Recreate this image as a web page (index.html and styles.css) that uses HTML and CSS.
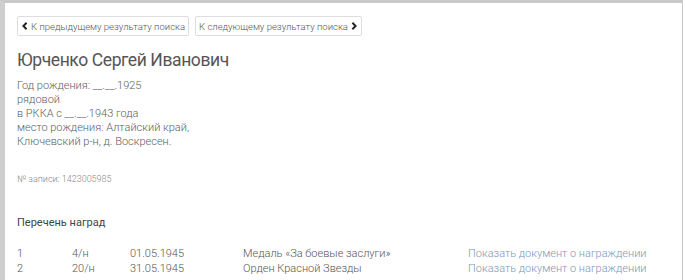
FILE: index.html
```html
<!DOCTYPE html>
<html lang="ru">
<head>
    <meta charset="UTF-8">
    <link rel="stylesheet" href="styles.css">
</head>
<body>
    <div class="page">
        <div class="nav">
            <a class="nav-btn" href="#">
                <svg class="arrow" viewBox="0 0 10 10" width="8" height="8"><path d="M7 1 L3 5 L7 9" fill="none" stroke="#222" stroke-width="2.4"/></svg>
                К предыдущему результату поиска
            </a>
            <a class="nav-btn" href="#">
                К следующему результату поиска
                <svg class="arrow" viewBox="0 0 10 10" width="8" height="8"><path d="M3 1 L7 5 L3 9" fill="none" stroke="#222" stroke-width="2.4"/></svg>
            </a>
        </div>

        <h1 class="name">Юрченко Сергей Иванович</h1>
        <div class="info">
            <div>Год рождения: __.__.1925</div>
            <div>рядовой</div>
            <div>в РККА с __.__.1943 года</div>
            <div>место рождения: Алтайский край,</div>
            <div>Ключевский р-н, д. Воскресен.</div>
        </div>

        <div class="record">№ записи: 1423005985</div>

        <div class="awards-title">Перечень наград</div>
        <div class="awards">
            <div class="award">
                <span class="col-n">1</span>
                <span class="col-doc">4/н</span>
                <span class="col-date">01.05.1945</span>
                <span class="col-name">Медаль «За боевые заслуги»</span>
                <a class="col-link" href="#">Показать документ о награждении</a>
            </div>
            <div class="award">
                <span class="col-n">2</span>
                <span class="col-doc">20/н</span>
                <span class="col-date">31.05.1945</span>
                <span class="col-name">Орден Красной Звезды</span>
                <a class="col-link" href="#">Показать документ о награждении</a>
            </div>
        </div>
    </div>
</body>
</html>
```

FILE: styles.css
```css
body {
    margin: 0;
    background-color: #fff;
    font-family: Roboto, 'Liberation Sans', sans-serif;
    color: #555;
}
.page {
    background-color: #fff;
    width: 683px;
    height: 280px;
    border-top: 3px solid #c9c9c9;
    border-left: 5px solid #cfcfcf;
    border-right: 1px solid #c8c8c8;
    box-sizing: border-box;
    padding: 13px 12px 0 12px;
    overflow: hidden;
}
.nav {
    display: flex;
    gap: 6px;
}
.nav-btn {
    display: flex;
    align-items: center;
    gap: 2px;
    height: 18px;
    padding: 0 3px;
    border: 1px solid #ddd;
    border-radius: 2px;
    font-size: 9.5px;
    font-weight: 300;
    color: #555;
    text-decoration: none;
    white-space: nowrap;
}
.arrow {
    display: block;
}
.name {
    margin: 12px 0 0 0;
    font-size: 17.5px;
    letter-spacing: -0.4px;
    font-weight: 400;
    color: #555;
    line-height: 24px;
}
.info {
    margin-top: 7px;
    font-size: 11px;
    font-weight: 300;
    line-height: 14px;
    color: #5e5e5e;
}
.record {
    margin-top: 25px;
    font-size: 9px;
    font-weight: 300;
    color: #888;
}
.awards-title {
    margin-top: 32px;
    font-size: 11px;
    font-weight: 400;
    color: #444;
}
.awards {
    margin-top: 17px;
    font-size: 11px;
    font-weight: 300;
    line-height: 15px;
    color: #555;
}
.award {
    display: flex;
}
.col-n {
    width: 55px;
}
.col-doc {
    width: 58px;
}
.col-date {
    width: 113px;
}
.col-name {
    width: 225px;
}
.col-link {
    color: #7b95b8;
    text-decoration: none;
}
```
